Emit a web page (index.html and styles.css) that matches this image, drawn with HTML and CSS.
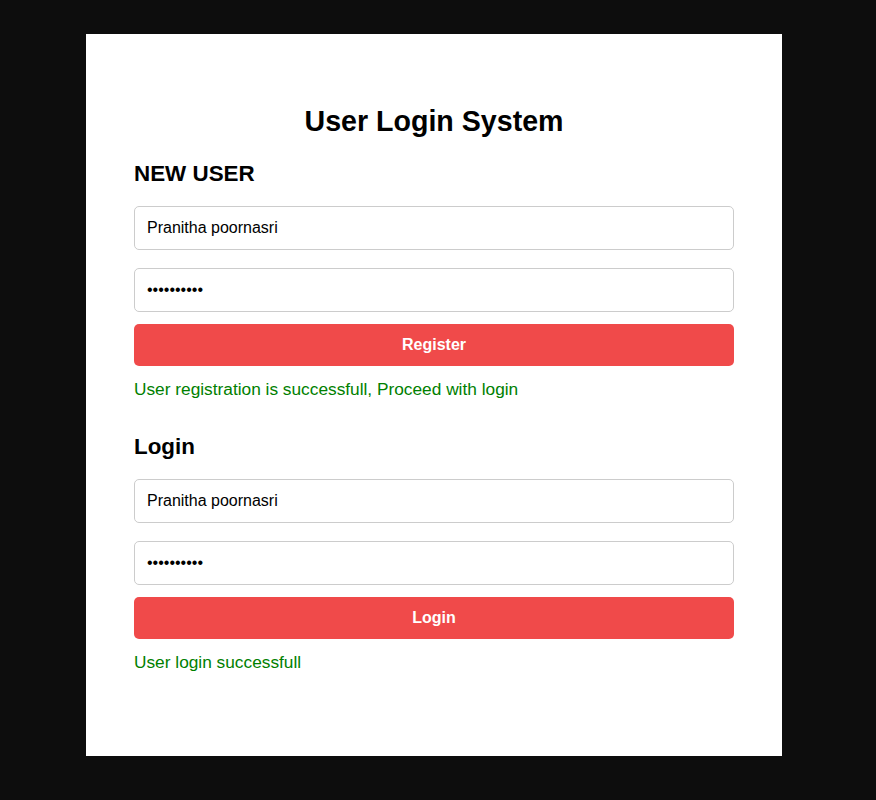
FILE: index.html
```html
<!DOCTYPE html>
<html lang="en">
<head>
<meta charset="utf-8">
<title>User Login System</title>
<link rel="stylesheet" href="styles.css">
</head>
<body>
<div class="card">
  <h1 class="title">User Login System</h1>
  <section class="section section-register">
    <h2 class="section-title">NEW USER</h2>
    <div class="fields">
      <input class="field" type="text" value="Pranitha poornasri">
      <input class="field" type="password" value="1234567890">
    </div>
    <button class="btn" type="button">Register</button>
    <p class="msg">User registration is successfull, Proceed with login</p>
  </section>
  <section class="section section-login">
    <h2 class="section-title">Login</h2>
    <div class="fields">
      <input class="field" type="text" value="Pranitha poornasri">
      <input class="field" type="password" value="1234567890">
    </div>
    <button class="btn" type="button">Login</button>
    <p class="msg">User login successfull</p>
  </section>
</div>
</body>
</html>
```
FILE: styles.css
```css
html, body {
  margin: 0;
  padding: 0;
  background: #0d0d0d;
  font-family: "Liberation Sans", Arial, sans-serif;
}

.card {
  box-sizing: border-box;
  width: 696px;
  height: 722px;
  margin: 34px 0 0 86px;
  padding: 70px 48px 0;
  background: #ffffff;
}

.title {
  margin: 0;
  font-size: 28.6px;
  font-weight: bold;
  line-height: 34px;
  text-align: center;
  color: #000;
}

.section {
  display: flex;
  flex-direction: column;
}

.section-register {
  margin-top: 23px;
}

.section-login {
  margin-top: 35px;
}

.section-title {
  margin: 0 0 19px;
  font-size: 22.4px;
  font-weight: bold;
  line-height: 26px;
  color: #000;
}

.fields {
  display: flex;
  flex-direction: column;
  gap: 18px;
}

.field {
  box-sizing: border-box;
  width: 100%;
  height: 44px;
  margin: 0;
  padding: 0 12px;
  border: 1px solid #cccccc;
  border-radius: 5px;
  background: #fff;
  font-family: "Liberation Sans", Arial, sans-serif;
  font-size: 16px;
  color: #000;
  outline: none;
}

.btn {
  box-sizing: border-box;
  width: 100%;
  height: 42px;
  margin-top: 12px;
  padding: 0;
  border: none;
  border-radius: 5px;
  background: #f04a4a;
  color: #fff;
  font-family: "Liberation Sans", Arial, sans-serif;
  font-size: 16px;
  font-weight: bold;
  cursor: pointer;
}

.msg {
  margin: 13px 0 0;
  font-size: 17.3px;
  line-height: 20px;
  color: #008000;
}
```
